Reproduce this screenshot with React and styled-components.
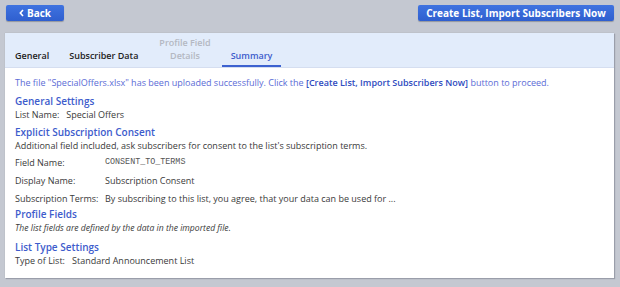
import React from 'react';
import styled, { createGlobalStyle } from 'styled-components';

const Global = createGlobalStyle`
  html, body {
    margin: 0;
    padding: 0;
    background: #c4c8d1;
    font-family: "Open Sans", "Liberation Sans", sans-serif;
  }
`;

const Page = styled.div`
  width: 620px;
  height: 287px;
  box-sizing: border-box;
  padding: 5px 6px 0 5px;
  display: flex;
  flex-direction: column;
`;

const Toolbar = styled.div`
  display: flex;
  justify-content: space-between;
  align-items: center;
  padding-left: 1px;
  height: 16px;
`;

const Button = styled.button`
  height: 16px;
  padding: 0;
  width: ${p => p.w}px;
  border: none;
  border-radius: 2px;
  background: linear-gradient(#3f73e0, #2f5fcf);
  box-shadow: 0 1px 1px rgba(0, 0, 0, 0.25);
  color: #fff;
  font-family: inherit;
  font-weight: 700;
  font-size: 10px;
  white-space: nowrap;
  display: flex;
  align-items: center;
  justify-content: center;
  gap: 3px;
  cursor: pointer;
`;

const Panel = styled.div`
  margin-top: 12px;
  background: #fff;
  height: 245px;
  box-shadow: 1px 1px 1px #9a9eaa, 0 0 1px #a0a4ae;
  display: flex;
  flex-direction: column;
`;

const Tabs = styled.div`
  background: #e2ecfb;
  height: 34px;
  display: flex;
  align-items: flex-end;
  padding-left: 10px;
  border-bottom: 1px solid #d5def0;
`;

const Tab = styled.div`
  font-size: 9px;
  font-weight: 600;
  line-height: ${p => (p.disabled ? '12.5px' : '11px')};
  text-align: center;
  color: ${p => (p.disabled ? '#b4b8c2' : p.active ? '#3d5ccc' : '#222')};
  padding: 0 ${p => p.pad}px ${p => (p.disabled ? 3 : 4)}px;
  border-bottom: 2px solid ${p => (p.active ? '#3d62d0' : 'transparent')};
  margin-right: ${p => p.mr}px;
  span {
    display: block;
  }
`;

const Body = styled.div`
  padding: 9px 10px 0;
  font-size: 9px;
  color: #3a3a3a;
`;

const Notice = styled.div`
  color: #5b6cd6;
  line-height: 12px;
  margin-bottom: 5px;
  white-space: nowrap;
  b {
    color: #2e4bc0;
    font-weight: 600;
  }
`;

const Heading = styled.div`
  color: #3d5ccc;
  font-size: 10px;
  font-weight: 600;
  line-height: 14px;
`;

const Line = styled.div`
  line-height: 14px;
  margin-bottom: ${p => (p.mb === undefined ? 3 : p.mb)}px;
  font-style: ${p => (p.italic ? 'italic' : 'normal')};
  font-size: ${p => (p.italic ? '8.6px' : 'inherit')};
  span + span {
    margin-left: 7px;
  }
`;

const Fields = styled.div`
  display: grid;
  grid-template-columns: 90px 1fr;
  grid-auto-rows: 18px;
  align-items: center;
`;

const Mono = styled.span`
  font-family: "Liberation Mono", monospace;
  font-size: 8.4px;
  color: #555;
`;

const Chevron = () => (
  <svg width="5" height="8" viewBox="0 0 5 8">
    <path d="M4 1 L1.3 4 L4 7" fill="none" stroke="#fff" strokeWidth="1.6" />
  </svg>
);

export default function App() {
  return (
    <>
      <Global />
      <Page>
        <Toolbar>
          <Button w={58}>
            <Chevron />
            Back
          </Button>
          <Button w={196}>Create List, Import Subscribers Now</Button>
        </Toolbar>
        <Panel>
          <Tabs>
            <Tab pad={0} mr={20}>General</Tab>
            <Tab pad={0} mr={21}>Subscriber Data</Tab>
            <Tab pad={0} mr={11} disabled>
              <span>Profile Field</span>
              <span>Details</span>
            </Tab>
            <Tab pad={9} mr={0} active>Summary</Tab>
          </Tabs>
          <Body>
            <Notice>
              The file "SpecialOffers.xlsx" has been uploaded successfully. Click the{' '}
              <b>[Create List, Import Subscribers Now]</b> button to proceed.
            </Notice>
            <Heading>General Settings</Heading>
            <Line>
              <span>List Name:</span>
              <span>Special Offers</span>
            </Line>
            <Heading>Explicit Subscription Consent</Heading>
            <Line mb={0}>
              Additional field included, ask subscribers for consent to the list's subscription terms.
            </Line>
            <Fields>
              <span>Field Name:</span>
              <Mono>CONSENT_TO_TERMS</Mono>
              <span>Display Name:</span>
              <span>Subscription Consent</span>
              <span>Subscription Terms:</span>
              <span>By subscribing to this list, you agree, that your data can be used for ...</span>
            </Fields>
            <Heading>Profile Fields</Heading>
            <Line italic mb={5}>The list fields are defined by the data in the imported file.</Line>
            <Heading>List Type Settings</Heading>
            <Line>
              <span>Type of List:</span>
              <span>Standard Announcement List</span>
            </Line>
          </Body>
        </Panel>
      </Page>
    </>
  );
}
